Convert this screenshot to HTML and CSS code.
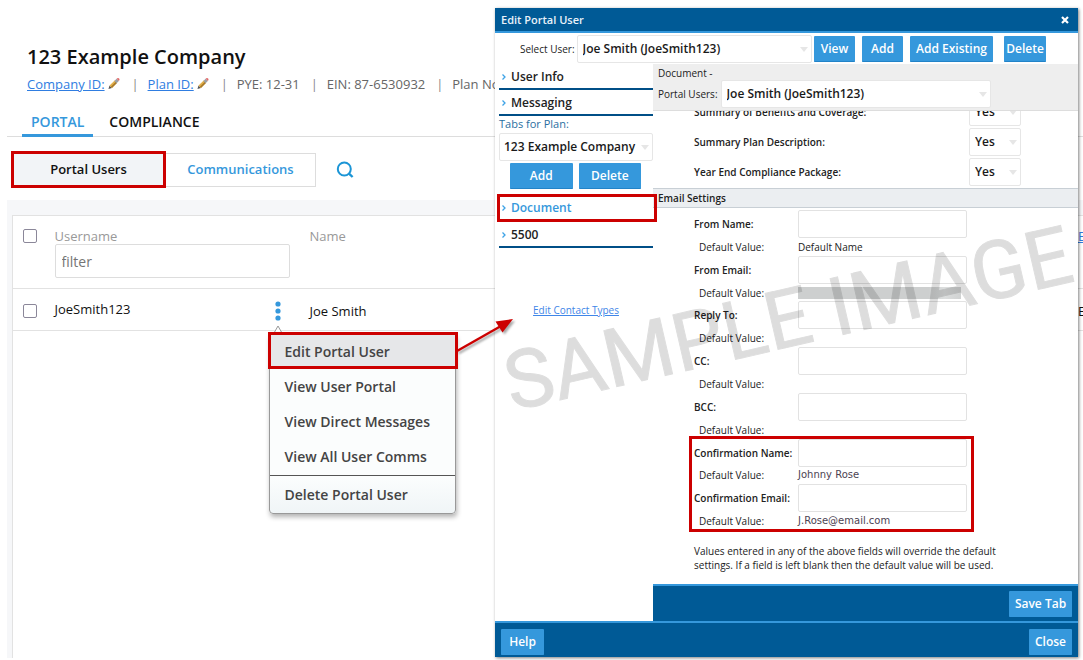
FILE: index.html
```html
<!DOCTYPE html>
<html lang="en">
<head>
<meta charset="utf-8">
<title>123 Example Company</title>
<link rel="stylesheet" href="styles.css">
</head>
<body>
<svg class="defs" width="0" height="0" aria-hidden="true">
  <symbol id="pencil" viewBox="0 0 14 14">
    <path d="M1 13 L2.2 9.2 L4.8 11.8 Z" fill="#555"/>
    <path d="M2.2 9.2 L8 3.6 L10.4 6.2 L4.8 11.8 Z" fill="#e3b04b"/>
    <path d="M3.6 10.6 L9.2 4.8 L10.4 6.2 L4.8 11.8 Z" fill="#a97b2c"/>
    <path d="M7.4 4.200 L9.8 1.9 L12.2 4.4 L9.8 6.8 Z" fill="#9aa0a6"/>
    <path d="M9.8 1.9 Q11.2 .4 12.6 1.6 Q13.6 3 12.2 4.4 Z" fill="#e06a6a"/>
  </symbol>
  <symbol id="chev" viewBox="0 0 6 8"><path d="M1.5 1.5 L4 4 L1.5 6.5" fill="none" stroke="#3ea3e6" stroke-width="1.3"/></symbol>
</svg>
<main class="page">
  <header class="head">
    <h1>123 Example Company</h1>
    <div class="meta">
      <span><a href="#">Company ID:</a><svg class="pencil"><use href="#pencil"/></svg></span>
      <i>|</i>
      <span><a href="#">Plan ID:</a><svg class="pencil"><use href="#pencil"/></svg></span>
      <i>|</i><span>PYE: 12-31</span><i>|</i><span>EIN: 87-6530932</span><i>|</i><span>Plan No:</span>
    </div>
  </header>
  <nav class="tabs">
    <a class="tab active" href="#">PORTAL</a>
    <a class="tab" href="#">COMPLIANCE</a>
  </nav>
  <div class="tools">
    <button class="seg marked" type="button">Portal Users</button>
    <button class="seg" type="button">Communications</button>
    <button class="search" type="button" aria-label="Search">
      <svg width="18" height="18" viewBox="0 0 18 18" fill="none" stroke="#1b95d6" stroke-width="2"><circle cx="8.3" cy="8" r="6.5"/><path d="M13 12.6 L16.6 16" stroke-width="2.4"/></svg>
    </button>
  </div>
  <section class="list">
    <table class="users">
      <colgroup><col class="c-check"><col class="c-user"><col><col class="c-mail"></colgroup>
      <thead>
        <tr>
          <th><input type="checkbox" aria-label="Select all"></th>
          <th><label for="flt">Username</label><input id="flt" class="filter" type="text" placeholder="filter"></th>
          <th>Name</th>
          <th><a href="#">Email</a></th>
        </tr>
      </thead>
      <tbody>
        <tr>
          <td><input type="checkbox" aria-label="Select JoeSmith123"></td>
          <td>
            <div class="usercell">
              <span>JoeSmith123</span>
              <div class="kebab">
                <button type="button" aria-label="Actions"><svg width="6" height="20" viewBox="0 0 6 20" fill="#3598dc"><circle cx="3" cy="3" r="2.6"/><circle cx="3" cy="10" r="2.6"/><circle cx="3" cy="17" r="2.6"/></svg></button>
                <svg class="caret" width="10" height="8" viewBox="0 0 10 8"><path d="M1 8 L5 1 L9 8" fill="#fff" stroke="#999"/></svg>
                <div class="menu">
                  <button class="marked" type="button">Edit Portal User</button>
                  <button type="button">View User Portal</button>
                  <button type="button">View Direct Messages</button>
                  <button type="button">View All User Comms</button>
                  <button class="last" type="button">Delete Portal User</button>
                </div>
              </div>
            </div>
          </td>
          <td>Joe Smith</td>
          <td>Email</td>
        </tr>
      </tbody>
    </table>
  </section>
</main>

<section class="dialog" role="dialog" aria-labelledby="dt">
  <header class="bar"><h2 id="dt">Edit Portal User</h2>
    <button type="button" aria-label="Close dialog"><svg width="8" height="8" viewBox="0 0 8 8"><path d="M1 1 L7 7 M7 1 L1 7" stroke="#fff" stroke-width="2.2"/></svg></button>
  </header>
  <div class="pick">
    <label for="su">Select User:</label>
    <span class="sel grow"><select id="su"><option>Joe Smith (JoeSmith123)</option></select></span>
    <button class="btn b-view" type="button">View</button>
    <button class="btn b-add" type="button">Add</button>
    <button class="btn b-exist" type="button">Add Existing</button>
    <button class="btn b-del" type="button">Delete</button>
  </div>
  <div class="body">
    <nav class="side">
      <a class="item" href="#"><svg class="chev"><use href="#chev"/></svg>User Info</a>
      <a class="item" href="#"><svg class="chev"><use href="#chev"/></svg>Messaging</a>
      <label class="plan" for="tp">Tabs for Plan:</label>
      <span class="sel"><select id="tp"><option>123 Example Company</option></select></span>
      <div class="pair"><button class="btn" type="button">Add</button><button class="btn" type="button">Delete</button></div>
      <a class="item marked" href="#"><svg class="chev"><use href="#chev"/></svg>Document</a>
      <a class="item" href="#"><svg class="chev"><use href="#chev"/></svg>5500</a>
      <a class="types" href="#">Edit Contact Types</a>
    </nav>
    <div class="pane">
      <div class="sub">
        <div>Document -</div>
        <div class="subrow"><label for="pu">Portal Users:</label><span class="sel"><select id="pu"><option>Joe Smith (JoeSmith123)</option></select></span></div>
      </div>
      <div class="scroll">
        <div class="opts">
          <div class="opt"><label for="o1">Summary of Benefits and Coverage:</label><span class="sel"><select id="o1"><option>Yes</option></select></span></div>
          <div class="opt"><label for="o2">Summary Plan Description:</label><span class="sel"><select id="o2"><option>Yes</option></select></span></div>
          <div class="opt"><label for="o3">Year End Compliance Package:</label><span class="sel"><select id="o3"><option>Yes</option></select></span></div>
        </div>
        <h3>Email Settings</h3>
        <div class="fields">
          <div class="field"><label for="f1">From Name:</label><input id="f1" type="text"><span class="dv">Default Value:</span><span>Default Name</span></div>
          <div class="field"><label for="f2">From Email:</label><input id="f2" type="text"><span class="dv">Default Value:</span><span class="redact"></span></div>
          <div class="field"><label for="f3">Reply To:</label><input id="f3" type="text"><span class="dv">Default Value:</span></div>
          <div class="field"><label for="f4">CC:</label><input id="f4" type="text"><span class="dv">Default Value:</span></div>
          <div class="field"><label for="f5">BCC:</label><input id="f5" type="text"><span class="dv">Default Value:</span></div>
          <div class="confirm">
            <div class="field"><label for="f6">Confirmation Name:</label><input id="f6" type="text"><span class="dv">Default Value:</span><span class="val">Johnny Rose</span></div>
            <div class="field"><label for="f7">Confirmation Email:</label><input id="f7" type="text"><span class="dv">Default Value:</span><span class="val">J.Rose@email.com</span></div>
          </div>
        </div>
        <p class="note">Values entered in any of the above fields will override the default settings. If a field is left blank then the default value will be used.</p>
      </div>
      <div class="save"><button class="btn" type="button">Save Tab</button></div>
    </div>
  </div>
  <footer class="foot"><button class="btn" type="button">Help</button><button class="btn" type="button">Close</button></footer>
</section>

<svg class="mark" width="600" height="220" viewBox="0 0 600 220" aria-hidden="true">
  <text x="0" y="0" transform="translate(22 201) rotate(-13)">SAMPLE IMAGE</text>
</svg>
<svg class="arrow" width="70" height="50" viewBox="0 0 70 50" aria-hidden="true">
  <path d="M2 36 L46 11" stroke="#c00" stroke-width="2.4"/>
  <path d="M58 4 L40.500 6.500 L47.500 17.500 Z" fill="#c00"/>
</svg>
</body>
</html>
```
FILE: styles.css
```css
*, *::before, *::after { box-sizing: border-box; }
html, body { height: 100%; margin: 0; }
body {
  position: relative;
  overflow: hidden;
  background: #fff;
  color: #111;
  font: 13px/20px "Open Sans", "Noto Sans", sans-serif;
}
button, input, select { font: inherit; color: inherit; }
button { cursor: pointer; }
h1, h2, h3, p { margin: 0; }
a { color: #2f7de1; }
.defs { position: absolute; }

/* page */
.page { display: flex; flex-direction: column; height: 100%; padding: 44px 0 2px 7px; }
.head { padding-left: 20px; white-space: nowrap; }
h1 { font-size: 20px; line-height: 26px; font-weight: 600; }
.meta { display: flex; margin-top: 4px; color: #666; }
.meta i { font-style: normal; width: 5px; margin: 0 11px; color: #888; text-align: center; }
.pencil { width: 14px; height: 13px; margin-left: 2px; vertical-align: -1px; }
.tabs { display: flex; padding-left: 15px; margin-top: 15px; border-bottom: 1px solid #ddd; }
.tab { padding: 3px 0 2px; margin-bottom: -1px; font-size: 14px; font-weight: 600; line-height: 20px; color: #111; text-decoration: none; border-bottom: 3px solid transparent; }
.tab.active { color: #3598dc; border-color: #3598dc; padding-left: 9px; padding-right: 9px; margin-right: 16px; }
.tools { display: flex; align-items: center; padding: 14px 4px 12px; }
.seg { height: 34px; width: 150px; border: 1px solid #ddd; border-left: 0; background: #fff; color: #3598dc; font-weight: 600; padding: 0 0 2px; }
.seg.marked { width: 155px; height: 37px; border: 3px solid #c00; background: #f2f4f7; color: #111; }
.search { border: 0; background: none; padding: 0; margin-left: 20px; height: 18px; }
.list { flex: 1; padding: 15px 0 0 5px; background: #f6f7f9; display: flex; flex-direction: column; }
.list::after { content: ""; flex: 1; background: #fff; border-left: 1px solid #e2e2e2; }
.users { width: 100%; table-layout: fixed; border-collapse: collapse; background: #fff; border: 1px solid #e2e2e2; border-right: 0; }
.c-check { width: 42px; }
.c-user { width: 255px; }
.c-mail { width: 5px; }
.users th, .users td { padding: 0; text-align: left; vertical-align: top; font-weight: 400; white-space: nowrap; }
.users th { height: 73px; padding-top: 10px; color: #999; }
.users td { height: 42px; padding-top: 12px; border-top: 1px solid #e2e2e2; }
.users input[type="checkbox"] { appearance: none; display: block; width: 14px; height: 14px; margin: 3px 0 0 10px; border: 1px solid #8b8799; border-radius: 2px; background: #fff; }
.users th label { display: block; height: 18px; }
.filter { display: block; width: 235px; height: 34px; padding: 0 6px; border: 1px solid #ddd; border-radius: 2px; font-size: 14px; }
.filter::placeholder { color: #757575; opacity: 1; }
.usercell { display: flex; justify-content: space-between; height: 20px; padding-right: 29px; line-height: 16px; }
.kebab { position: relative; }
.kebab > button { display: block; border: 0; padding: 0; background: none; height: 20px; }
.caret { position: absolute; left: -2px; top: 24px; }
.menu {
  position: absolute; z-index: 1; left: -6px; top: 32px; width: 187px;
  display: flex; flex-direction: column;
  border: 1px solid #999; border-radius: 4px;
  background: linear-gradient(#fbfdfd 80%, #f0f5f7);
  box-shadow: 1px 3px 5px rgba(0,0,0,.3);
}
.menu button { height: 35px; padding: 0 15px; border: 0; background: none; text-align: left; font-size: 14px; font-weight: 600; color: #444; }
.menu button.marked { position: relative; background: #e6e7e9; }
.menu button.marked::after { content: ""; position: absolute; inset: -2px -3px 0 -2px; border: 3px solid #c00; }
.menu button.last { height: 38px; margin-top: 1px; border-top: 1px solid #555; }

/* dialog */
.dialog {
  position: absolute; z-index: 2; left: 495px; right: 5px; top: 8px; bottom: 3px;
  display: flex; flex-direction: column;
  background: #fff; font-size: 10px; line-height: 14px; color: #222;
  box-shadow: 1px 1px 3px rgba(0,0,0,.5);
}
.bar { display: flex; flex: none; justify-content: space-between; align-items: center; height: 25px; padding: 1px 9px 0 6px; background: #005a96; border-bottom: 2px solid #3598dc; color: #e8f2fa; }
.bar h2 { font-size: 11px; font-weight: 600; }
.bar button { border: 0; background: none; padding: 0; height: 8px; display: flex; }
.btn { height: 26px; padding: 1px 0 0; border: 0; border-bottom: 1px solid #2283c8; border-radius: 1px; background: #3598dc; color: #fff; font-size: 12px; font-weight: 600; white-space: nowrap; }
.pick { display: flex; flex: none; align-items: center; height: 31px; padding: 0 32px 0 25px; }
.grow { flex: 1; margin: 0 2px; }
.b-view { width: 41px; margin-right: 7px; }
.b-add { width: 41px; margin-right: 7px; }
.b-exist { width: 83px; margin-right: 11px; }
.b-del { width: 42px; }
.sel { position: relative; display: block; }
.sel::after { content: ""; position: absolute; right: 4px; top: 12px; border: 4px solid transparent; border-top: 5px solid #e6e6e6; border-bottom: 0; }
.sel select { appearance: none; display: block; width: 100%; height: 28px; padding: 0 5px; border: 1px solid #e6e6e6; border-radius: 2px; background: #fff; font-size: 12px; font-weight: 600; color: #1a1a1a; }
.side .sel select { padding: 0 4px; }
.body { display: flex; flex: 1; min-height: 0; }
.side { flex: none; width: 158px; padding-left: 4px; display: flex; flex-direction: column; }
.item { display: flex; align-items: center; height: 26px; padding: 1px 0 0 2px; border-bottom: 2px solid #004f87; color: #222; font-size: 12px; font-weight: 600; text-decoration: none; }
.chev { width: 6px; height: 8px; margin-right: 4px; }
.plan { height: 17px; padding-top: 1px; color: #2a6f9f; font-size: 11px; }
.pair { display: flex; gap: 6px; padding: 2px 12px 5px 11px; }
.pair .btn { flex: 1; }
.item.marked { position: relative; height: 28px; padding-top: 2px; color: #3598dc; border-color: transparent; }
.item.marked::after { content: ""; position: absolute; inset: 0 -4px -2px -2px; border: 3px solid #c00; z-index: 1; }
.types { align-self: center; margin-top: 55px; color: #3f86e8; }
.pane { flex: 1; min-width: 0; display: flex; flex-direction: column; }
.sub { flex: none; height: 47px; padding: 2px 5px 0; background: #eee; border-bottom: 1px solid #ddd; }
.subrow { display: flex; align-items: center; gap: 3px; }
.subrow .sel { width: 270px; }
.scroll { flex: 1; min-height: 0; overflow: hidden; }
.opts { margin-top: -13px; display: grid; gap: 2px; padding-bottom: 2px; }
.opt { display: grid; grid-template-columns: 275px 52px; align-items: center; padding-left: 41px; }
.opt label, .field label { font-weight: 600; }
h3 { height: 20px; padding: 0 5px; border: 1px solid #c8cfd5; border-width: 1px 0; background: #ebeef1; font-size: 10px; line-height: 18px; font-weight: 600; }
.fields { display: grid; grid-template-rows: repeat(5, 1fr) 2fr; height: 320px; margin-top: 2px; padding-left: 41px; }
.field { display: grid; grid-template-columns: 104px 169px; grid-template-rows: 28px 1fr; align-items: center; }
.field input { width: 169px; height: 28px; border: 1px solid #e2e2e2; border-radius: 2px; background: #fff; padding: 0 5px; }
.dv { padding-left: 5px; }
.val { font-family: "DejaVu Sans", sans-serif; font-size: 10px; color: #4c4352; }
.redact { align-self: center; width: 163px; height: 12px; background: linear-gradient(90deg, #cdcfcf 0 80%, #dcdede 90%, #d0d2d2); }
.confirm { position: relative; display: grid; grid-template-rows: 1fr 1fr; }
.confirm::after { content: ""; position: absolute; left: -5px; top: -3px; bottom: -2px; width: 285px; border: 3px solid #c00; pointer-events: none; }
.note { width: 350px; padding: 14px 0 0 41px; }
.save { display: flex; flex: none; justify-content: flex-end; align-items: center; height: 37px; padding-right: 6px; background: #005a96; border-top: 2px solid #3598dc; }
.save .btn { width: 63px; }
.foot { display: flex; flex: none; justify-content: space-between; align-items: center; height: 36px; padding: 3px 6px 0; background: #005a96; border-top: 2px solid #3598dc; }
.foot .btn { width: 43px; }
.save .btn, .foot .btn { border-color: #3598dc; padding-top: 2px; }

/* overlays */
.mark { position: absolute; z-index: 3; left: 490px; top: 210px; pointer-events: none; }
.mark text { font: 81px Roboto, sans-serif; fill: #000; stroke: #000; stroke-width: 1; opacity: .13; }
.arrow { position: absolute; z-index: 4; left: 455px; top: 315px; pointer-events: none; filter: drop-shadow(2px 2px 1px rgba(0,0,0,.35)); }
```
